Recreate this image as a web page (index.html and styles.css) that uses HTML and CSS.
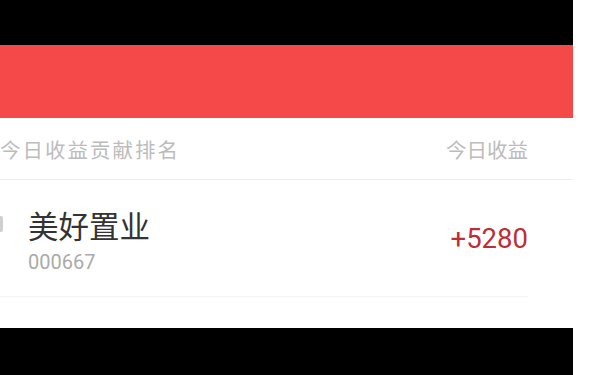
FILE: index.html
```html
<!DOCTYPE html>
<html lang="zh-CN">
<head>
<meta charset="utf-8">
<link rel="stylesheet" href="styles.css">
</head>
<body>
<div class="frame">
  <div class="topbar"></div>
  <div class="banner"></div>
  <div class="header">
    <span class="h-left">今日收益贡献排名</span>
    <span class="h-right">今日收益</span>
  </div>
  <div class="sep"></div>
  <div class="item">
    <div class="mark"></div>
    <div class="info">
      <div class="name">美好置业</div>
      <div class="code">000667</div>
    </div>
    <div class="value">+5280</div>
  </div>
  <div class="spacer"></div>
  <div class="bottombar"></div>
</div>
</body>
</html>
```
FILE: styles.css
```css
* { box-sizing: border-box; }
html, body { margin: 0; padding: 0; background: #fff; }
body {
  width: 600px;
  height: 375px;
  overflow: hidden;
  font-family: Roboto, "Noto Sans CJK SC", sans-serif;
}
.frame {
  width: 573px;
  display: flex;
  flex-direction: column;
}
.topbar {
  height: 45px;
  background: #000;
}
.banner {
  height: 73px;
  background: #f54848;
}
.header {
  height: 61px;
  display: flex;
  align-items: center;
  justify-content: space-between;
  padding-right: 45px;
  font-size: 20.5px;
  color: #bcbcbc;
}
.h-left {
  letter-spacing: 2px;
}
.sep {
  height: 1px;
  background: #ececec;
}
.item {
  display: flex;
  align-items: flex-start;
  height: 117px;
  margin-right: 45px;
  border-bottom: 1px solid #f3f3f3;
}
.mark {
  width: 3px;
  height: 16px;
  margin-top: 36px;
  background: #cfcfcf;
  border-radius: 0 2px 2px 0;
}
.info {
  margin-left: 25px;
  margin-top: 31px;
  flex: 1;
}
.name {
  font-size: 30.5px;
  line-height: 34px;
  color: #333;
}
.code {
  margin-top: 5px;
  font-size: 20px;
  line-height: 24px;
  color: #aaa;
}
.value {
  align-self: center;
  font-size: 27.5px;
  color: #bd2f38;
}
.spacer { height: 31px; }
.bottombar {
  height: 47px;
  background: #000;
}
```
